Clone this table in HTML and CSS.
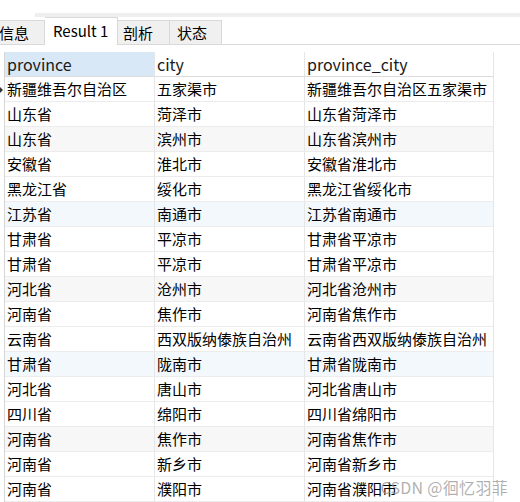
FILE: index.html
```html
<!DOCTYPE html>
<html>
<head>
<meta charset="utf-8">
<link rel="stylesheet" href="styles.css">
</head>
<body>
<div class="top"><div class="band"></div></div>
<div class="tabs">
  <div class="tab first">信息</div>
  <div class="tab active">Result 1</div>
  <div class="tab">剖析</div>
  <div class="tab">状态</div>
  <div class="tabfill"></div>
</div>
<div class="grid">
  <div class="row head">
    <div class="ind"></div>
    <div class="c c1 sel">province</div>
    <div class="c c2">city</div>
    <div class="c c3">province_city</div>
  </div>
  <div class="row"><div class="ind cur"><span class="arrow"></span></div><div class="c c1">新疆维吾尔自治区</div><div class="c c2">五家渠市</div><div class="c c3">新疆维吾尔自治区五家渠市</div></div>
  <div class="row"><div class="ind"></div><div class="c c1">山东省</div><div class="c c2">菏泽市</div><div class="c c3">山东省菏泽市</div></div>
  <div class="row gray"><div class="ind"></div><div class="c c1">山东省</div><div class="c c2">滨州市</div><div class="c c3">山东省滨州市</div></div>
  <div class="row"><div class="ind"></div><div class="c c1">安徽省</div><div class="c c2">淮北市</div><div class="c c3">安徽省淮北市</div></div>
  <div class="row"><div class="ind"></div><div class="c c1">黑龙江省</div><div class="c c2">绥化市</div><div class="c c3">黑龙江省绥化市</div></div>
  <div class="row blue"><div class="ind"></div><div class="c c1">江苏省</div><div class="c c2">南通市</div><div class="c c3">江苏省南通市</div></div>
  <div class="row"><div class="ind"></div><div class="c c1">甘肃省</div><div class="c c2">平凉市</div><div class="c c3">甘肃省平凉市</div></div>
  <div class="row"><div class="ind"></div><div class="c c1">甘肃省</div><div class="c c2">平凉市</div><div class="c c3">甘肃省平凉市</div></div>
  <div class="row gray"><div class="ind"></div><div class="c c1">河北省</div><div class="c c2">沧州市</div><div class="c c3">河北省沧州市</div></div>
  <div class="row"><div class="ind"></div><div class="c c1">河南省</div><div class="c c2">焦作市</div><div class="c c3">河南省焦作市</div></div>
  <div class="row"><div class="ind"></div><div class="c c1">云南省</div><div class="c c2">西双版纳傣族自治州</div><div class="c c3">云南省西双版纳傣族自治州</div></div>
  <div class="row blue"><div class="ind"></div><div class="c c1">甘肃省</div><div class="c c2">陇南市</div><div class="c c3">甘肃省陇南市</div></div>
  <div class="row"><div class="ind"></div><div class="c c1">河北省</div><div class="c c2">唐山市</div><div class="c c3">河北省唐山市</div></div>
  <div class="row"><div class="ind"></div><div class="c c1">四川省</div><div class="c c2">绵阳市</div><div class="c c3">四川省绵阳市</div></div>
  <div class="row gray"><div class="ind"></div><div class="c c1">河南省</div><div class="c c2">焦作市</div><div class="c c3">河南省焦作市</div></div>
  <div class="row"><div class="ind"></div><div class="c c1">河南省</div><div class="c c2">新乡市</div><div class="c c3">河南省新乡市</div></div>
  <div class="row"><div class="ind"></div><div class="c c1">河南省</div><div class="c c2">濮阳市</div><div class="c c3">河南省濮阳市</div></div>
</div>
<div class="watermark">CSDN @徊忆羽菲</div>
</body>
</html>
```
FILE: styles.css
```css
html, body {
  margin: 0;
  padding: 0;
  background: #ffffff;
  width: 520px;
  height: 502px;
  overflow: hidden;
  position: relative;
  font-family: "Noto Sans CJK SC", "Noto Sans", sans-serif;
  font-size: 15px;
  color: #000000;
}
.top {
  height: 17px;
  padding-top: 13px;
  box-sizing: border-box;
}
.band {
  margin-left: 35px;
  height: 4px;
  background: #efefef;
}
.tabs {
  display: flex;
  align-items: flex-end;
  height: 28px;
  box-sizing: border-box;
}
.tab {
  height: 25px;
  box-sizing: border-box;
  background: #f0f0f0;
  border: 1px solid #d9d9d9;
  border-left: none;
  padding: 0 13px 0 7px;
  line-height: 23px;
  white-space: nowrap;
}
.tab.first {
  width: 45px;
  padding: 0;
  text-indent: -1px;
  overflow: hidden;
}
.tab.active {
  height: 28px;
  background: #ffffff;
  border-bottom: none;
  border-top: 1px solid #d9d9d9;
  width: 73px;
  padding: 0 0 0 8px;
  line-height: 26px;
}
.tab:nth-child(3) { width: 52px; padding-left: 5px; }
.tab:nth-child(4) { width: 52px; padding-left: 7px; }
.tabfill {
  flex: 1;
  height: 1px;
  background: #d9d9d9;
}
.grid {
  padding-top: 7px;
}
.row {
  display: flex;
  height: 25px;
}
.row.gray .c { background: #f7f7f7; }
.row.blue .c { background: #f3f8fd; }
.ind {
  width: 4px;
  border-right: 1px solid #d6d6d6;
  position: relative;
}
.arrow {
  position: absolute;
  left: 0;
  top: 10px;
  width: 0;
  height: 0;
  border-left: 3px solid #333;
  border-top: 3px solid transparent;
  border-bottom: 3px solid transparent;
}
.c {
  box-sizing: border-box;
  height: 25px;
  line-height: 24px;
  padding-left: 2px;
  border-bottom: 1px solid #ececec;
  border-right: 1px solid #e6e6e6;
  white-space: nowrap;
  overflow: hidden;
}
.c1 { width: 150px; }
.c2 { width: 150px; }
.c3 { width: 189px; }
.head .c {
  border-bottom: 1px solid #dcdcdc;
  color: #1a1a1a;
  font-size: 16px;
}
.head .c.sel { background: #d9e8f6; }
.watermark {
  position: absolute;
  right: 12px;
  bottom: 3px;
  font-size: 16px;
  color: rgba(150, 150, 150, 0.75);
  letter-spacing: 0.3px;
}
```
